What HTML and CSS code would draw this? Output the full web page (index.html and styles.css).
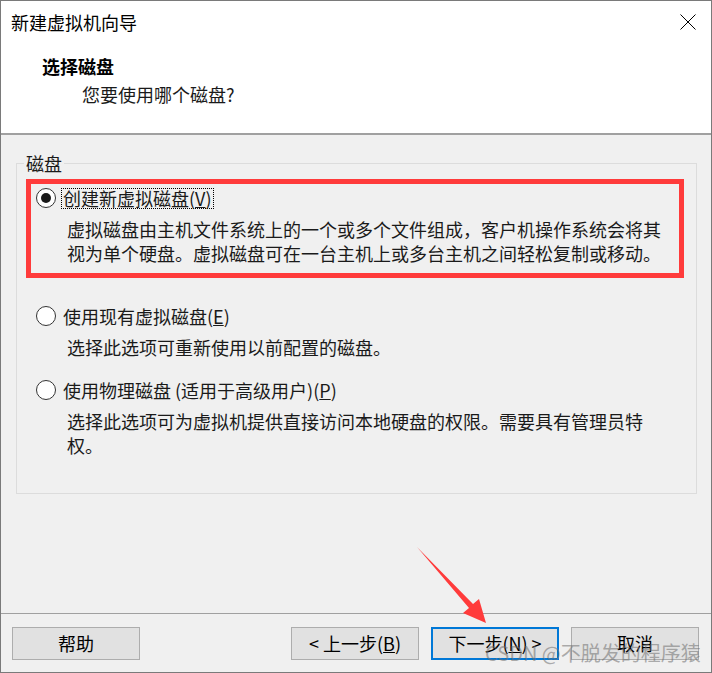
FILE: index.html
```html
<!DOCTYPE html>
<html lang="zh-CN">
<head>
<meta charset="utf-8">
<title>新建虚拟机向导</title>
<link rel="stylesheet" href="styles.css">
</head>
<body>
<div class="window">
  <header class="header">
    <div class="titlebar">
      <span class="title">新建虚拟机向导</span>
      <svg class="close" viewBox="0 0 16 16" aria-hidden="true"><path d="M0.5 0.5 L15.5 15.5 M15.5 0.5 L0.5 15.5" stroke="#000" stroke-width="1" fill="none"/></svg>
    </div>
    <div class="heading">选择磁盘</div>
    <div class="subheading">您要使用哪个磁盘?</div>
  </header>
  <main class="content">
    <fieldset class="group">
      <legend class="group-label">磁盘</legend>
      <div class="option option-highlight">
        <div class="option-row">
          <span class="radio radio-checked"></span>
          <span class="option-label option-focused">创建新虚拟磁盘(<u>V</u>)</span>
        </div>
        <p class="option-desc">虚拟磁盘由主机文件系统上的一个或多个文件组成，客户机操作系统会将其<br>视为单个硬盘。虚拟磁盘可在一台主机上或多台主机之间轻松复制或移动。</p>
      </div>
      <div class="option">
        <div class="option-row">
          <span class="radio"></span>
          <span class="option-label">使用现有虚拟磁盘(<u>E</u>)</span>
        </div>
        <p class="option-desc">选择此选项可重新使用以前配置的磁盘。</p>
      </div>
      <div class="option">
        <div class="option-row">
          <span class="radio"></span>
          <span class="option-label">使用物理磁盘 (适用于高级用户)(<u>P</u>)</span>
        </div>
        <p class="option-desc">选择此选项可为虚拟机提供直接访问本地硬盘的权限。需要具有管理员特<br>权。</p>
      </div>
    </fieldset>
  </main>
  <footer class="footer">
    <button class="btn btn-help">帮助</button>
    <button class="btn">&lt; 上一步(<u>B</u>)</button>
    <button class="btn btn-default">下一步(<u>N</u>) &gt;</button>
    <button class="btn">取消</button>
  </footer>
  <svg class="arrow" viewBox="0 0 712 673" aria-hidden="true"><polygon points="417,547 473,604 479,599 486,623 463,613 469,608" fill="#ff3b3b"/></svg>
  <div class="watermark">CSDN @不脱发的程序猿</div>
</div>
</body>
</html>
```

FILE: styles.css
```css
html, body {
  margin: 0;
  padding: 0;
  background: #f0f0f0;
}

.window {
  position: relative;
  width: 712px;
  height: 673px;
  box-sizing: border-box;
  border: 1px solid #7a7a7a;
  display: flex;
  flex-direction: column;
  background: #f0f0f0;
  font-family: "Noto Sans CJK SC", "Noto Sans", sans-serif;
  font-size: 18px;
  color: #000;
  overflow: hidden;
}

.header {
  background: #fff;
  height: 134px;
  box-sizing: border-box;
  border-bottom: 2px solid #a0a0a0;
  padding: 9px 15px 0 10px;
}

.titlebar {
  display: flex;
  align-items: center;
  justify-content: space-between;
  height: 24px;
  line-height: 24px;
}

.close {
  width: 16px;
  height: 16px;
  display: block;
}

.heading {
  margin: 20px 0 0 31px;
  font-weight: bold;
  line-height: 24px;
}

.subheading {
  margin: 4px 0 0 71px;
  line-height: 24px;
  color: #1a1a1a;
}

.content {
  flex: 1;
  padding: 16px 14px 0 15px;
}

.group {
  margin: 0;
  padding: 9px 0 28px 0;
  border: 1px solid #dcdcdc;
  min-inline-size: auto;
}

.group-label {
  margin-left: 7px;
  padding: 0 2px;
  line-height: 24px;
  color: #1a1a1a;
}

.option {
  margin-left: 14px;
  width: 648px;
  box-sizing: border-box;
  padding: 2px 0 8px 5px;
  margin-bottom: 9px;
}

.option:last-child {
  margin-bottom: 0;
}

.option-highlight {
  outline: 5px solid #ff3b3b;
  margin-bottom: 29px;
}

.option-row {
  display: flex;
  align-items: center;
  height: 24px;
}

.radio {
  width: 20px;
  height: 20px;
  box-sizing: border-box;
  border: 1px solid #333;
  border-radius: 50%;
  background: #fff;
  display: flex;
  align-items: center;
  justify-content: center;
  flex: none;
}

.radio-checked::after {
  content: "";
  width: 10px;
  height: 10px;
  border-radius: 50%;
  background: #1a1a1a;
}

.option-label {
  margin-left: 5px;
  padding: 0 1px;
  line-height: 19px;
  border: 1px solid transparent;
  white-space: nowrap;
  color: #1a1a1a;
}

.option-focused {
  border: 1px dotted #000;
}

.option-desc {
  margin: 7px 0 0 31px;
  line-height: 24px;
  white-space: nowrap;
  color: #1a1a1a;
}

.footer {
  height: 59px;
  box-sizing: border-box;
  border-top: 1px solid #a0a0a0;
  display: flex;
  gap: 12px;
  padding: 13px 12px 0 11px;
}

.btn {
  width: 128px;
  height: 33px;
  box-sizing: border-box;
  border: 1px solid #adadad;
  background: #e1e1e1;
  font-family: "Noto Sans CJK SC", "Noto Sans", sans-serif;
  font-size: 18px;
  color: #000;
  padding: 0 0 2px 0;
  line-height: 24px;
}

.btn-help {
  margin-right: auto;
}

.btn-default {
  border: 2px solid #0078d7;
}

.arrow {
  position: absolute;
  left: -1px;
  top: -1px;
  width: 712px;
  height: 673px;
  pointer-events: none;
}

.watermark {
  position: absolute;
  left: 484px;
  top: 640px;
  font-size: 20px;
  line-height: 24px;
  white-space: nowrap;
  color: rgba(110, 110, 110, 0.55);
  pointer-events: none;
}
```
